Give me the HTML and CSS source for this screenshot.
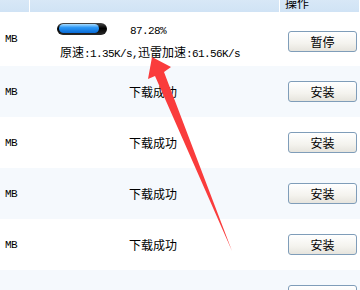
FILE: index.html
```html
<!DOCTYPE html>
<html lang="zh-CN">
<head>
  <meta charset="UTF-8">
  <title>下载管理</title>
  <link rel="stylesheet" href="styles.css">
</head>
<body>
  <div class="list">
    <div class="row head">
      <div class="cell c1"></div>
      <div class="cell c2"></div>
      <div class="cell c3">操作</div>
    </div>

    <div class="row first">
      <div class="cell c1"><span class="num">MB</span></div>
      <div class="cell c2 progress-cell">
        <div class="line1">
          <div class="bar"><div class="fill" style="width: 88%;"></div></div>
          <span class="num pct">87.28%</span>
        </div>
        <div class="line2">原速<span class="num">:1.35K/s,</span>迅雷加速<span class="num">:61.56K/s</span></div>
      </div>
      <div class="cell c3"><button class="btn">暂停</button></div>
    </div>

    <div class="row alt">
      <div class="cell c1"><span class="num">MB</span></div>
      <div class="cell c2"><span class="status">下载成功</span></div>
      <div class="cell c3"><button class="btn">安装</button></div>
    </div>
    <div class="row">
      <div class="cell c1"><span class="num">MB</span></div>
      <div class="cell c2"><span class="status">下载成功</span></div>
      <div class="cell c3"><button class="btn">安装</button></div>
    </div>
    <div class="row alt">
      <div class="cell c1"><span class="num">MB</span></div>
      <div class="cell c2"><span class="status">下载成功</span></div>
      <div class="cell c3"><button class="btn">安装</button></div>
    </div>
    <div class="row">
      <div class="cell c1"><span class="num">MB</span></div>
      <div class="cell c2"><span class="status">下载成功</span></div>
      <div class="cell c3"><button class="btn">安装</button></div>
    </div>
    <div class="row alt">
      <div class="cell c1"><span class="num">MB</span></div>
      <div class="cell c2"><span class="status">下载成功</span></div>
      <div class="cell c3"><button class="btn">安装</button></div>
    </div>
  </div>

  <!-- 标注箭头 -->
  <svg class="arrow" width="360" height="290" viewBox="0 0 360 290">
    <polygon points="152,57 171,67 164,72 232,251 155,76 148,79" fill="#fa3c3c"/>
  </svg>
</body>
</html>
```

FILE: styles.css
```css
body {
  margin: 0;
  background-color: #fff;
  color: #000;
  font-family: "Noto Sans CJK SC", sans-serif;
  font-size: 12px;
  line-height: 14px;
  overflow: hidden;
  position: relative;
  width: 360px;
  height: 290px;
}
.list {
  margin-top: -16px;
}
.row {
  display: grid;
  grid-template-columns: 30px 250px 80px;
  height: 51px;
}
.row.alt {
  background-color: #f5f9fd;
}
.row.head {
  height: 28px;
  background: linear-gradient(#e2eef9, #d0e3f5);
  overflow: hidden;
}
.row.head .cell {
  border-right: 1px solid #fff;
  box-sizing: border-box;
  padding: 10px 0 0 5px;
  color: #000;
}
.row.first {
  height: 54px;
}
.cell {
  display: flex;
  align-items: center;
}
.c1 {
  padding-left: 5px;
}
.c2 {
  padding-left: 99px;
}
.c3 {
  padding-left: 8px;
}
.row.first .c3 {
  padding-top: 5px;
}
.num {
  font-family: "Liberation Mono", monospace;
  font-size: 11px;
  letter-spacing: -0.6px;
}
.progress-cell {
  flex-direction: column;
  align-items: flex-start;
  justify-content: flex-start;
  padding-left: 27px;
  padding-top: 11px;
}
.line1 {
  display: flex;
  align-items: flex-end;
  height: 14px;
}
.bar {
  width: 50px;
  height: 12px;
  box-sizing: border-box;
  border-radius: 6px;
  background: linear-gradient(#4a4a4a, #000 45%, #2a2a2a);
  padding: 1px 2px;
  margin-bottom: 2px;
}
.fill {
  height: 9px;
  border-radius: 5px;
  background: linear-gradient(#a8dcff, #2a96f5 40%, #0a6bd6);
}
.pct {
  margin-left: 23px;
  line-height: 12px;
}
.line2 {
  margin-top: 8px;
  margin-left: 3px;
  white-space: nowrap;
}
.btn {
  width: 69px;
  height: 21px;
  padding: 0;
  border: 1px solid #7f9db9;
  border-radius: 3px;
  background: linear-gradient(#ffffff, #f4f3ee 60%, #e6e4dd);
  font-family: "Noto Sans CJK SC", sans-serif;
  font-size: 12px;
  line-height: 19px;
  color: #000;
}
.arrow {
  position: absolute;
  top: 0;
  left: 0;
  pointer-events: none;
}
```
